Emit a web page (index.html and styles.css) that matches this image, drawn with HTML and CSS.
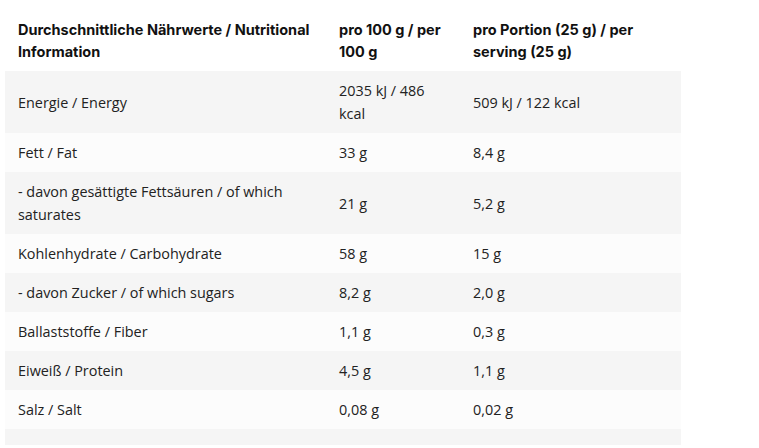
FILE: index.html
```html
<!DOCTYPE html>
<html lang="de">
<head>
<meta charset="utf-8">
<link rel="stylesheet" href="styles.css">
</head>
<body>
<table class="nutri">
  <colgroup>
    <col class="c1">
    <col class="c2">
    <col class="c3">
  </colgroup>
  <thead>
    <tr>
      <th>Durchschnittliche Nährwerte / Nutritional Information</th>
      <th>pro 100 g / per 100 g</th>
      <th>pro Portion (25 g) / per serving (25 g)</th>
    </tr>
  </thead>
  <tbody>
    <tr><td>Energie / Energy</td><td>2035 kJ / 486 kcal</td><td>509 kJ / 122 kcal</td></tr>
    <tr><td>Fett / Fat</td><td>33 g</td><td>8,4 g</td></tr>
    <tr><td>- davon gesättigte Fettsäuren / of which saturates</td><td>21 g</td><td>5,2 g</td></tr>
    <tr><td>Kohlenhydrate / Carbohydrate</td><td>58 g</td><td>15 g</td></tr>
    <tr><td>- davon Zucker / of which sugars</td><td>8,2 g</td><td>2,0 g</td></tr>
    <tr><td>Ballaststoffe / Fiber</td><td>1,1 g</td><td>0,3 g</td></tr>
    <tr><td>Eiweiß / Protein</td><td>4,5 g</td><td>1,1 g</td></tr>
    <tr><td>Salz / Salt</td><td>0,08 g</td><td>0,02 g</td></tr>
    <tr class="empty"><td></td><td></td><td></td></tr>
  </tbody>
</table>
</body>
</html>
```

FILE: styles.css
```css
html, body {
  margin: 0;
  padding: 0;
  background: #ffffff;
}

body {
  padding: 10px 0 0 5px;
  font-family: "Open Sans", "Liberation Sans", sans-serif;
  color: #222222;
}

.nutri {
  border-collapse: collapse;
  width: 676px;
  table-layout: fixed;
  font-size: 14.4px;
  line-height: 23px;
}

.c1 { width: 321px; }
.c2 { width: 134px; }
.c3 { width: 221px; }

.nutri th,
.nutri td {
  padding: 8px 13px;
  text-align: left;
  vertical-align: middle;
}

.nutri th {
  font-family: Inter, "Liberation Sans", sans-serif;
  font-weight: 700;
  font-size: 14.5px;
  line-height: 22px;
  padding-top: 9px;
  color: #111111;
  vertical-align: top;
}

.nutri tbody tr:nth-child(odd) {
  background: #f5f5f5;
}

.nutri tbody tr:nth-child(even) {
  background: #fcfcfc;
}

.nutri tr.empty td {
  padding: 0;
  height: 16px;
}
```
